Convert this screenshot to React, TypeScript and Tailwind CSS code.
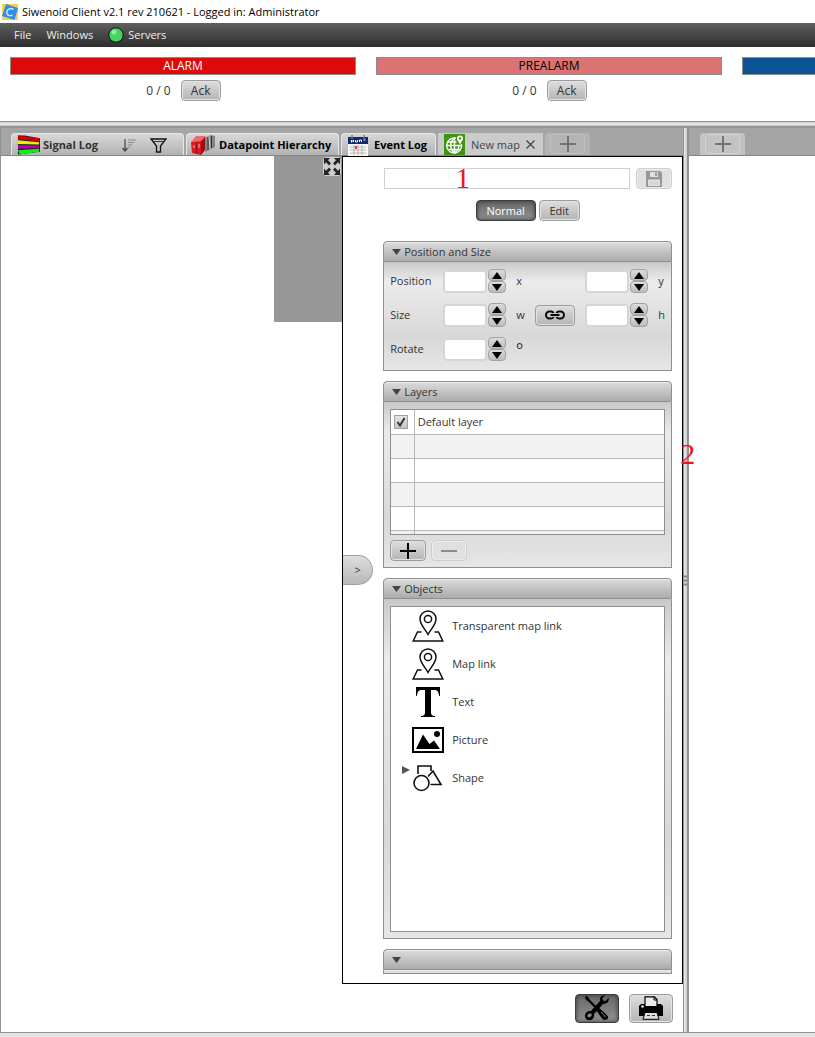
import React, { useState } from 'react';

const buttonClassName = "flex items-center justify-center rounded border border-[#9c9c9c] bg-gradient-to-b from-[#dedede] to-[#b4b4b4] shadow-[inset_0_0_0_1px_#e2e2e2]";
const pressedClassName = "flex items-center justify-center rounded border border-[#3c3c3c] bg-gradient-to-b from-[#686868] to-[#929292] shadow-[inset_0_0_4px_#333]";
const disabledClassName = "flex items-center justify-center rounded border border-[#cfcfcf] bg-[#e0e0e0] shadow-[inset_0_0_0_1px_#ebebeb]";
const tabClassName = "flex h-[22px] items-center rounded-t border border-b-0 border-[#e6e6e6] bg-gradient-to-b from-[#d8d8d8] to-[#b2b2b2] pt-px font-bold";

/* ---------- icons ---------- */

const AppIcon = () => (
  <svg width="16" height="16" viewBox="0 0 16 16">
    <rect width="16" height="16" fill="#f6cf52" />
    <path d="M4 0L16 4L12.500 16L0 12Z" fill="#2f8ee8" />
    <path d="M11.500 5.500C9 3.500 5 5 4.800 8.300C4.800 11.500 8 12.500 10.500 10.800" fill="none" stroke="#cfe8ff" strokeWidth="1.500" />
  </svg>
);

const SignalIcon = () => (
  <svg className="shrink-0" width="23" height="20" viewBox="0 0 24 20">
    <path d="M1 0H8L24 3V17L2 20H1Z" fill="#222" />
    <path d="M1 0L23 3V6L1 4Z" fill="#d40000" />
    <path d="M1 5L23 7V9.500L1 9Z" fill="#e8f000" />
    <path d="M1 10L23 10.500V13L1 14Z" fill="#b000c0" />
    <path d="M1 15.500L23 14V17L3 20Z" fill="#10ee10" />
  </svg>
);

const SortIcon = () => (
  <svg width="14" height="14" viewBox="0 0 14 14" fill="none">
    <path d="M3 1V12M0.500 10L3 13L5.500 10" stroke="#444" strokeWidth="1.200" />
    <path d="M6 2H14M6 4.500H12M6 7H10M6 9.500H8" stroke="#888" strokeWidth="1.200" />
  </svg>
);

const FilterIcon = () => (
  <svg width="17" height="15" viewBox="0 0 17 15" fill="none" stroke="#111" strokeWidth="1.300">
    <path d="M1 1H16L10.500 8V14H6.500V8Z" />
    <path d="M3.500 3.500H13" strokeWidth="0.800" />
  </svg>
);

const HierarchyIcon = () => (
  <svg className="shrink-0" width="24" height="20" viewBox="0 0 24 20">
    <path d="M13 3L20 0L24 1V12L14 17Z" fill="#858585" />
    <path d="M17 2V15M20.500 1V13" stroke="#333" strokeWidth="1" />
    <path d="M18 1L19 14" stroke="#ccc" />
    <path d="M0 7L5 1L15 1L11 6Z" fill="#ef6b6b" />
    <path d="M0 7L10 6V20L1 18Z" fill="#dc1820" />
    <path d="M10 6L14 2V15L10 20Z" fill="#a00c12" />
    <path d="M5.500 7V19" stroke="#8c0b10" />
    <path d="M3 10V13M8 9V13" stroke="#ffb0b0" />
  </svg>
);

const CalendarIcon = () => (
  <svg className="shrink-0" width="20" height="21" viewBox="0 0 20 21">
    <rect y="2" width="20" height="19" fill="#f6f6f6" />
    <rect y="2" width="20" height="7" fill="#132a6b" />
    <path d="M4 0V4M16 0V4" stroke="#5b7fb0" strokeWidth="1.500" />
    <path d="M3.500 7.500V5L5.500 7V5M7.500 5V7H9.500V5M11.500 7V5H13.500V7M15.500 5H17.500" stroke="#fff" fill="none" />
    <path d="M2 12H18M2 15H18M2 18H18M6 10V20M10 10V20M14 10V20" stroke="#aaa" strokeWidth="0.800" />
    <path d="M8 11V14" stroke="#e33" strokeWidth="2" />
  </svg>
);

const GlobeIcon = () => (
  <svg className="shrink-0" width="21" height="21" viewBox="0 0 21 21">
    <rect width="21" height="21" fill="#3f9414" />
    <g fill="none" stroke="#fff" strokeWidth="1.400">
      <path d="M12 4.200A7.500 7.500 0 1 0 17.500 10" />
      <path d="M10.500 4C5.500 8 5.500 15 10.500 19M10.500 4V19M10.500 19C14 16.500 15 13 14.500 11M4 8H12.500M3 11.500H18M4.500 15.500H17" />
    </g>
    <path d="M16 1.500A3 3 0 0 0 13 4.500C13 6.500 15 8 16 10.500C17 8 19 6.500 19 4.500A3 3 0 0 0 16 1.500Z" fill="#fff" />
    <circle cx="16" cy="4.500" r="1.200" fill="#3f9414" />
  </svg>
);

const PlusIcon = ({ color }: { color: string }) => (
  <svg width="16" height="16" viewBox="0 0 16 16">
    <path d="M0 8H16M8 0V16" stroke={color} strokeWidth="2" />
  </svg>
);

const ExpandIcon = () => (
  <svg width="18" height="19" viewBox="0 0 18 18" preserveAspectRatio="none">
    <path d="M1 1H7L5 3L8 6L6 8L3 5L1 7ZM17 1V7L15 5L12 8L10 6L13 3L11 1ZM1 17V11L3 13L6 10L8 12L5 15L7 17ZM17 17H11L13 15L10 12L12 10L15 13L17 11Z" fill="#262626" />
  </svg>
);

const SaveIcon = () => (
  <svg width="16" height="16" viewBox="0 0 16 16">
    <path d="M0 0H14L16 2V16H0Z" fill="#989898" />
    <path d="M4 1H12V6H4ZM2 8.500H14V15H2Z" fill="#e2e2e2" />
    <path d="M9 1.500H11V5H9Z" fill="#989898" />
    <path d="M3 11H13M3 13H13" stroke="#ccc" />
  </svg>
);

const LinkIcon = () => (
  <svg width="20" height="10" viewBox="0 0 20 10" fill="none" stroke="#0a0a0a" strokeWidth="2">
    <path d="M8.500 3C8 1.700 7 1.500 6 1.500H4.500A3.500 3.500 0 0 0 4.500 8.500H6C7 8.500 8 8.300 8.500 7" />
    <path d="M11.500 3C12 1.700 13 1.500 14 1.500H15.500A3.500 3.500 0 0 1 15.500 8.500H14C13 8.500 12 8.300 11.500 7" />
    <path d="M5.500 5H14.500" />
  </svg>
);

const MapPinIcon = () => (
  <svg width="32" height="32" viewBox="0 0 32 32" fill="none" stroke="#111" strokeWidth="1.500">
    <path d="M16 24.500C13 19 8 14.500 8 9A8 8 0 0 1 24 9C24 14.500 19 19 16 24.500Z" />
    <circle cx="16" cy="9" r="3.600" />
    <path d="M9.500 22H5.500L1.200 31H30.800L26.500 22H22.500" />
  </svg>
);

const TextIcon = () => (
  <svg width="32" height="32" viewBox="0 0 32 32">
    <rect x="4" y="1" width="24" height="3" />
    <path d="M4 1H8V4C6 5 5.200 7 4.800 10H4ZM28 1H24V4C26 5 26.800 7 27.200 10H28Z" />
    <rect x="13" y="3" width="6" height="26" />
    <path d="M13 26C13 29 12 29.800 9 30V31H23V30C20 29.800 19 29 19 26Z" />
  </svg>
);

const PictureIcon = () => (
  <svg width="32" height="32" viewBox="0 0 32 32">
    <rect x="1" y="4" width="30" height="24" fill="none" stroke="#000" strokeWidth="2" />
    <path d="M4 25L11 10.500L17.500 20L22 16.500L28 25Z" />
    <circle cx="25" cy="10" r="3" />
  </svg>
);

const ShapeIcon = () => (
  <svg width="32" height="32" viewBox="0 0 32 32" fill="none" stroke="#111" strokeWidth="1.600">
    <path d="M6 12V4H19V9" />
    <circle cx="9.500" cy="21" r="7.500" />
    <path d="M16 14.500L21 9L29 22.500H18.500" />
  </svg>
);

const ToolsIcon = () => (
  <svg width="26" height="26" viewBox="0 0 26 26">
    <path d="M2 1L4 2L6 5L13 12L11.500 13.500L4.500 6.500L2 5L1 2Z" />
    <path d="M14 12L23 20C25 22 24 25 21 25C20 25 19 24.500 18 23.500L12 15Z" />
    <path d="M24.500 3L21.500 6L19 5.500L18.500 3L21 0.500C17.500 0 15 2.500 16 6L7 16C2.500 15.500 0.500 19 1 22C1.500 25 5 26 8 24.500C10 23 10.500 21 10 19L19 9C23 9.500 25.500 6 24.500 3ZM5.500 18.500C8 18 8.500 20 7 21.500C5.500 23 3 22.500 3.500 20.500C3.800 19.300 4.500 18.700 5.500 18.500Z" fillRule="evenodd" />
    <path d="M17 17L21.500 22" stroke="#888" />
  </svg>
);

const PrinterIcon = () => (
  <svg width="24" height="24" viewBox="0 0 24 24">
    <path d="M2 8H22L24 10V20H0V10Z" />
    <path d="M6 0.800H15.500L18 3.500V10.500H6Z" fill="#e9e9e9" stroke="#000" strokeWidth="1.200" />
    <path d="M15 1V4H18" fill="none" stroke="#000" />
    <path d="M6 16.500H18L20 23.300H4Z" fill="#ddd" stroke="#000" strokeWidth="1" />
    <path d="M8 19.500H11M13 19.500H16" stroke="#333" />
    <circle cx="3.500" cy="10.500" r="1.300" fill="#fff" />
  </svg>
);

/* ---------- controls ---------- */

const StepButton = ({ label, path }: { label: string; path: string }) => (
  <button type="button" aria-label={label} className="flex h-3 w-[18px] items-center justify-center rounded border border-[#a2a2a2] bg-gradient-to-b from-[#dcdcdc] to-[#bdbdbd]">
    <svg width="10" height="7" viewBox="0 0 10 7"><path d={path} /></svg>
  </button>
);

const Spinner = ({ label }: { label: string }) => (
  <div className="flex items-center gap-px">
    <input aria-label={label} className="h-[23px] w-11 rounded-sm border-2 border-[#d6d6d6] bg-white px-1 focus:outline-none" />
    <div className="flex flex-col">
      <StepButton label={`Increase ${label}`} path="M0 7L5 0L10 7Z" />
      <StepButton label={`Decrease ${label}`} path="M0 0H10L5 7Z" />
    </div>
  </div>
);

interface SectionProps {
  title: string;
  className?: string;
  bodyClassName?: string;
  children?: React.ReactNode;
}

const Section: React.FC<SectionProps> = ({ title, className = '', bodyClassName = '', children }) => (
  <section className={`flex flex-col ${className}`}>
    <button
      type="button"
      aria-label={title || 'Details'}
      className="flex h-[21px] w-full items-center gap-[3px] rounded-t border border-[#8f8f8f] bg-gradient-to-b from-[#dcdcdc] to-[#ababab] pl-2 text-left shadow-[inset_0_1px_0_#ececec]"
    >
      <svg width="9" height="6" viewBox="0 0 9 6"><path d="M0 0H9L4.500 6Z" fill="#444" /></svg>
      {title}
    </button>
    <div className={`border border-t-0 border-[#8f8f8f] bg-[linear-gradient(#c9c9c9,#ebebeb_18%,#d8d8d8_70%,#e6e6e6)] ${bodyClassName}`}>
      {children}
    </div>
  </section>
);

interface AlarmBlockProps {
  title?: string;
  barClassName: string;
}

const AlarmBlock: React.FC<AlarmBlockProps> = ({ title, barClassName }) => (
  <div className="w-[346px] shrink-0">
    <div className={`flex h-[18px] items-center justify-center border border-[#8c8c8c] ${barClassName}`}>{title}</div>
    {title && (
      <div className="mt-[5px] flex items-center justify-center gap-[10px] pl-px">
        <span>0 / 0</span>
        <button type="button" className={`${buttonClassName} h-[21px] w-10`}>Ack</button>
      </div>
    )}
  </div>
);

const layers = ['Default layer', '', '', '', '', ''];

const objects = [
  { name: 'Transparent map link', Icon: MapPinIcon },
  { name: 'Map link', Icon: MapPinIcon },
  { name: 'Text', Icon: TextIcon },
  { name: 'Picture', Icon: PictureIcon },
  { name: 'Shape', Icon: ShapeIcon, expandable: true },
];

const MapPanel = () => {
  const [mode, setMode] = useState<'normal' | 'edit'>('normal');
  const [visible, setVisible] = useState(true);

  return (
    <aside className="flex w-[341px] shrink-0 items-center gap-[10px] border border-black bg-white pr-[10px]">
      <button type="button" aria-label="Collapse panel" className="flex h-[30px] w-[30px] shrink-0 items-center justify-center rounded-r-full border border-l-0 border-[#a0a0a0] bg-gradient-to-b from-[#dedede] to-[#b8b8b8]">
        &gt;
      </button>
      <div className="flex flex-1 flex-col gap-[10px] self-stretch pt-[11px] pb-[9px]">
        <div className="flex items-center gap-[6px]">
          <div className="relative flex flex-1">
            <input aria-label="Map name" className="ml-px h-[21px] w-full border border-[#d0d0d0] bg-white px-1 focus:outline-none" />
            <span className="pointer-events-none absolute -top-1 left-[72px] font-['Liberation_Serif',serif] text-[30px] leading-7 text-[#f0141e]">1</span>
          </div>
          <button type="button" aria-label="Save" disabled className={`${disabledClassName} h-[21px] w-9`}><SaveIcon /></button>
        </div>
        <div className="mt-px mb-[10px] flex justify-center gap-[3px]">
          <button type="button" onClick={() => setMode('normal')} className={`${mode === 'normal' ? `${pressedClassName} text-white` : buttonClassName} h-[21px] w-[60px]`}>Normal</button>
          <button type="button" onClick={() => setMode('edit')} className={`${mode === 'edit' ? `${pressedClassName} text-white` : buttonClassName} h-[21px] w-[41px]`}>Edit</button>
        </div>

        <Section title="Position and Size" bodyClassName="flex flex-col gap-[10px] px-[6px] pt-[7px] pb-[9px]">
          <div className="flex items-center">
            <span className="w-[53px]">Position</span>
            <Spinner label="x" />
            <span className="ml-[10px] flex-1">x</span>
            <Spinner label="y" />
            <span className="w-[17px] pl-[10px]">y</span>
          </div>
          <div className="flex items-center">
            <span className="w-[53px]">Size</span>
            <Spinner label="width" />
            <span className="ml-[10px] flex-1">w</span>
            <button type="button" aria-label="Keep aspect ratio" className={`${buttonClassName} mr-[10px] h-[21px] w-10`}><LinkIcon /></button>
            <Spinner label="height" />
            <span className="w-[17px] pl-[10px]">h</span>
          </div>
          <div className="flex items-center">
            <span className="w-[53px]">Rotate</span>
            <Spinner label="rotation" />
            <span className="ml-[10px] text-[18px]">º</span>
          </div>
        </Section>

        <Section title="Layers" bodyClassName="px-[6px] pt-[7px] pb-[6px]">
          <div className="h-[126px] overflow-hidden border border-[#8f8f8f] bg-white">
            <table className="w-full table-fixed border-collapse">
              <tbody>
                {layers.map((layer, i) => (
                  <tr key={i} className="h-6 border-b border-[#b8b8b8] even:bg-[#f1f1f1]">
                    <td className="w-[23px] border-r border-[#b8b8b8] p-0">
                      {layer && (
                        <label className="relative ml-[3px] block h-[14px] w-[14px]">
                          <input type="checkbox" aria-label={layer} checked={visible} onChange={(e) => setVisible(e.target.checked)} className="block h-[14px] w-[14px] appearance-none border border-[#a0a0a0] bg-gradient-to-b from-[#e4e4e4] to-[#c4c4c4]" />
                          {visible && (
                            <svg className="pointer-events-none absolute inset-0" width="14" height="14" viewBox="0 0 14 14">
                              <path d="M3.500 7L6 10.500L10.500 3" fill="none" stroke="#333" strokeWidth="2" />
                            </svg>
                          )}
                        </label>
                      )}
                    </td>
                    <td className="p-0 pl-[3px]">{layer}</td>
                  </tr>
                ))}
              </tbody>
            </table>
          </div>
          <div className="mt-[5px] flex gap-[5px]">
            <button type="button" aria-label="Add layer" className={`${buttonClassName} h-[21px] w-9`}><PlusIcon color="#000" /></button>
            <button type="button" aria-label="Remove layer" disabled className={`${disabledClassName} h-[21px] w-9`}>
              <svg width="16" height="2" viewBox="0 0 16 2"><path d="M0 1H16" stroke="#8c8c8c" strokeWidth="2" /></svg>
            </button>
          </div>
        </Section>

        <Section title="Objects" className="flex-1" bodyClassName="flex flex-1 flex-col px-[6px] pt-[7px] pb-[6px]">
          <ul className="flex-1 border border-[#8f8f8f] bg-white">
            {objects.map(({ name, Icon, expandable }) => (
              <li key={name} className="flex h-[38px] items-center">
                <span className="flex w-[21px] items-center justify-end self-stretch pr-[2px] pb-4">
                  {expandable && <svg width="8" height="8" viewBox="0 0 8 8"><path d="M0 0L8 4L0 8Z" fill="#555" /></svg>}
                </span>
                <Icon />
                <span className="ml-2">{name}</span>
              </li>
            ))}
          </ul>
        </Section>

        <Section title="" bodyClassName="h-1" />
      </div>
    </aside>
  );
};

const App: React.FC = () => {
  return (
    <div className="flex min-h-screen flex-col overflow-hidden bg-white font-['Open_Sans','Noto_Sans',sans-serif] text-[11px] leading-4 text-[#333]">
      <header className="flex h-[23px] items-center gap-1 pl-[2px] text-black">
        <AppIcon />
        <h1>Siwenoid Client v2.1 rev 210621 - Logged in: Administrator</h1>
      </header>
      <nav className="flex h-6 items-center bg-gradient-to-b from-[#606060] to-[#2e2e2e] pl-[14px] text-[#eee]">
        <button type="button">File</button>
        <button type="button" className="ml-[15px]">Windows</button>
        <button type="button" className="ml-[15px] flex items-center gap-1">
          <svg width="16" height="16" viewBox="0 0 16 16">
            <circle cx="8" cy="8" r="7.200" fill="#45d460" stroke="#111" />
            <circle cx="6" cy="5" r="2.500" fill="#8df09e" />
          </svg>
          Servers
        </button>
      </nav>

      <div className="flex h-[74px] gap-5 overflow-hidden pt-[10px] pl-[10px] text-[12px]">
        <AlarmBlock title="ALARM" barClassName="bg-[#dc0a0a] text-white" />
        <AlarmBlock title="PREALARM" barClassName="bg-[#dc7373] text-black" />
        <AlarmBlock barClassName="bg-[#0c5494]" />
      </div>

      <div className="h-[7px] border-t border-b-2 border-[#939393] bg-gradient-to-b from-[#c8c8c8] via-[#f0f0f0] to-[#bdbdbd]" />

      <div className="flex flex-1">
        <main className="flex flex-[683] flex-col border-l border-[#939393]">
          <div className="flex h-7 items-end gap-[2px] border-b border-[#858585] bg-[#a5a5a5] pl-[10px] text-black">
            <div className={`${tabClassName} w-[173px] pl-[5px] text-[#333]`}>
              <SignalIcon />
              <span className="ml-[3px] flex-1 whitespace-nowrap">Signal Log</span>
              <button type="button" aria-label="Sort"><SortIcon /></button>
              <button type="button" aria-label="Filter" className="mr-4 ml-[14px]"><FilterIcon /></button>
            </div>
            <div className={`${tabClassName} w-[153px] gap-1 pl-[4px]`}>
              <HierarchyIcon />
              <span className="whitespace-nowrap">Datapoint Hierarchy</span>
            </div>
            <div className={`${tabClassName} w-[95px] gap-[6px] pl-[6px]`}>
              <CalendarIcon />
              <span className="whitespace-nowrap">Event Log</span>
            </div>
            <div className="flex h-[22px] w-[105px] items-center bg-[#cbcbcb] pt-px pl-[6px] text-[#444]">
              <GlobeIcon />
              <span className="ml-[6px] whitespace-nowrap">New map</span>
              <button type="button" aria-label="Close tab" className="ml-[6px]">
                <svg width="9" height="9" viewBox="0 0 9 9"><path d="M0.500 0.500L8.500 8.500M8.500 0.500L0.500 8.500" stroke="#444" strokeWidth="1.300" /></svg>
              </button>
            </div>
            <button type="button" aria-label="New tab" className="flex h-[22px] w-[45px] items-center justify-center rounded-t bg-[#b4b4b4]">
              <span className="flex h-5 w-[35px] items-center justify-center rounded border border-[#c0c0c0]"><PlusIcon color="#737373" /></span>
            </button>
          </div>
          <div className="flex flex-1">
            <div className="flex flex-1 items-start justify-end">
              <div className="flex h-[166px] w-[68px] items-start justify-end bg-[#979797]">
                <button type="button" aria-label="Fit to window" className="mt-px mr-px rounded-sm bg-[#cfcfcf]"><ExpandIcon /></button>
              </div>
            </div>
            <MapPanel />
          </div>
          <div className="flex h-12 items-center justify-end gap-[10px] pr-[10px]">
            <button type="button" aria-label="Tools" className={`${pressedClassName} h-[29px] w-11`}><ToolsIcon /></button>
            <button type="button" aria-label="Print" className={`${buttonClassName} h-[29px] w-11`}><PrinterIcon /></button>
          </div>
        </main>

        <div className="relative flex w-[6px] flex-col items-center justify-center border-r-2 border-l border-[#939393] bg-gradient-to-r from-[#e8e8e8] to-[#cfcfcf]">
          <svg width="3" height="11" viewBox="0 0 3 11"><path d="M0 1.500H3M0 5.500H3M0 9.500H3" stroke="#888" strokeWidth="2" /></svg>
          <span className="pointer-events-none absolute top-[312px] -left-1 font-['Liberation_Serif',serif] text-[30px] leading-7 text-[#f0141e]">2</span>
        </div>

        <div className="flex-[126]">
          <div className="flex h-7 items-end border-b border-[#858585] bg-[#a5a5a5] pl-[11px]">
            <button type="button" aria-label="New tab" className="flex h-[22px] w-[45px] items-center justify-center rounded-t bg-[#c3c3c3]">
              <span className="flex h-5 w-[35px] items-center justify-center rounded border border-[#d3d3d3]"><PlusIcon color="#737373" /></span>
            </button>
          </div>
        </div>
      </div>
      <div className="h-[5px] border-t border-[#939393] bg-[#e4e4e4]" />
    </div>
  );
};

export default App;
